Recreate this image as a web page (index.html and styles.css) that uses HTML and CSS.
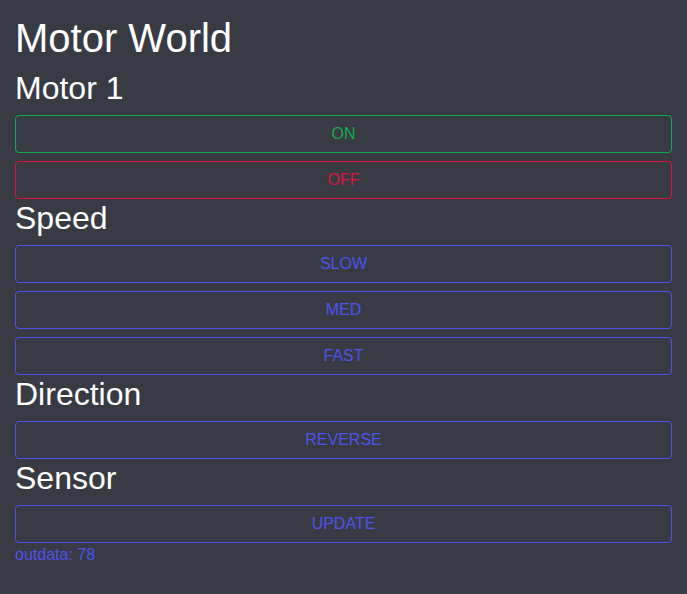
FILE: index.html
```html
<!DOCTYPE html>
<html lang="en">
<head>
<meta charset="utf-8">
<title>Motor World</title>
<link rel="stylesheet" href="styles.css">
</head>
<body>
<main class="page">
  <h1 class="title">Motor World</h1>
  <h2 class="section">Motor 1</h2>
  <button class="btn btn-on">ON</button>
  <button class="btn btn-off">OFF</button>
  <h2 class="section">Speed</h2>
  <button class="btn btn-blue">SLOW</button>
  <button class="btn btn-blue">MED</button>
  <button class="btn btn-blue">FAST</button>
  <h2 class="section">Direction</h2>
  <button class="btn btn-blue">REVERSE</button>
  <h2 class="section">Sensor</h2>
  <button class="btn btn-blue">UPDATE</button>
  <div class="outdata">outdata: 78</div>
</main>
</body>
</html>
```

FILE: styles.css
```css
html, body {
  margin: 0;
  padding: 0;
  background: #383b44;
  height: 100%;
}
body {
  font-family: "Liberation Sans", Arial, sans-serif;
  color: #ffffff;
}
.page {
  display: flex;
  flex-direction: column;
  padding: 15px 15px 0 15px;
}
.title {
  margin: 0 0 8px 0;
  font-size: 40px;
  font-weight: normal;
  line-height: 46px;
}
.section {
  margin: 0 0 8px 0;
  padding-top: 1px;
  font-size: 32px;
  font-weight: normal;
  line-height: 37px;
}
.btn {
  display: block;
  width: 100%;
  height: 38px;
  margin: 0 0 8px 0;
  padding: 0;
  background: transparent;
  border: 1px solid;
  border-radius: 4px;
  font-family: "Liberation Sans", Arial, sans-serif;
  font-size: 16px;
  line-height: 36px;
  text-align: center;
}
.btn + .section {
  margin-top: -8px;
}
.btn-on {
  color: #13a94a;
  border-color: #13a94a;
}
.btn-off {
  color: #dc143c;
  border-color: #dc143c;
}
.btn-blue {
  color: #4b53ee;
  border-color: #4b53ee;
}
.outdata {
  margin-top: -5px;
  font-size: 16px;
  line-height: 18px;
  color: #4b53ee;
}
```
